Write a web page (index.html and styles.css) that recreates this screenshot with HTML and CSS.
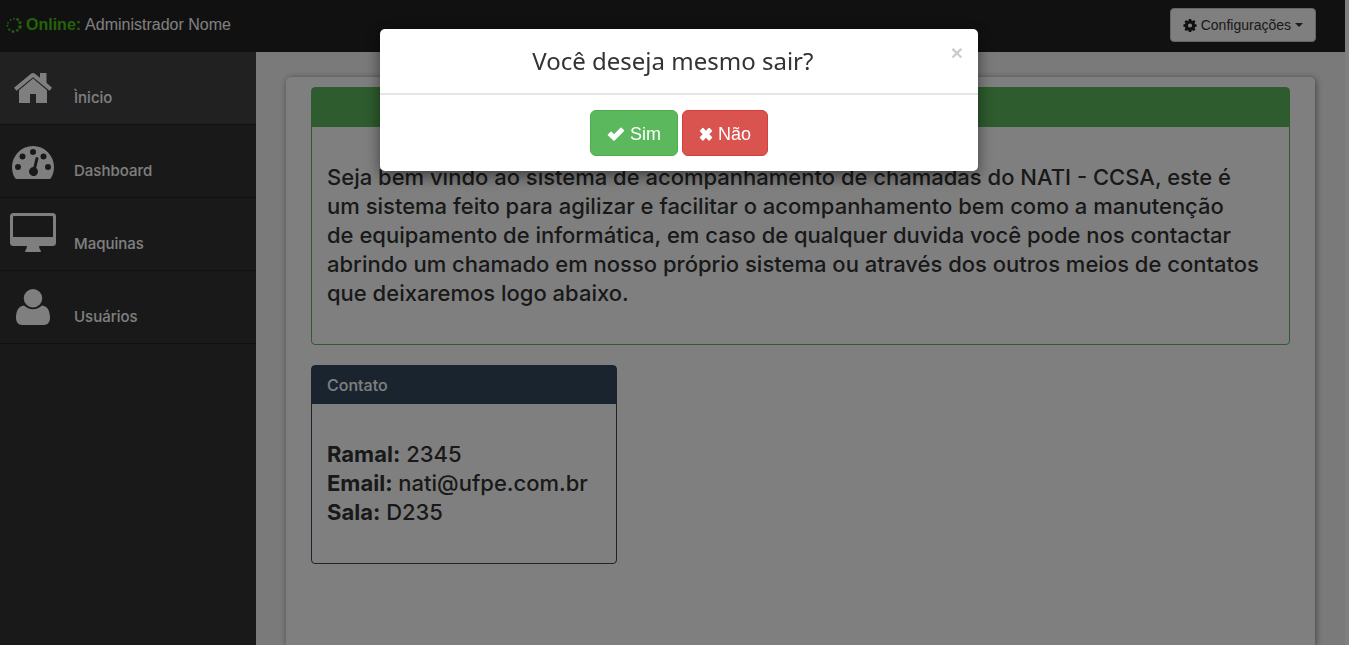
FILE: index.html
```html
<!DOCTYPE html>
<html lang="pt-BR">
<head>
<meta charset="utf-8">
<meta name="viewport" content="width=device-width, initial-scale=1">
<title>NATI - CCSA</title>
<link rel="stylesheet" href="styles.css">
</head>
<body>
<div class="page">
  <header class="topbar">
    <div class="status">
      <svg class="status-icon" viewBox="0 0 16 16" aria-hidden="true">
        <circle cx="8" cy="1.7" r="1"/><circle cx="11.6" cy="2.6" r="1.5"/><circle cx="14" cy="5.5" r="1.6"/><circle cx="14" cy="9.9" r="1.9"/><circle cx="11.3" cy="13.3" r="1.4"/><circle cx="7" cy="14.5" r="1.5"/><circle cx="3.3" cy="12.6" r="1.2"/><circle cx="1.4" cy="8.8" r="1"/><circle cx="2" cy="5.8" r=".9"/><circle cx="4.6" cy="3" r="1"/>
      </svg>
      <strong class="online">Online:</strong>
      <span>Administrador Nome</span>
    </div>
    <button class="btn-config" type="button">
      <svg class="gear" viewBox="0 0 14 14" aria-hidden="true"><path fill-rule="evenodd" d="M5.800 1h2.400l.3 1.600 1 .4 1.400-.9 1.600 1.600-.9 1.400.4 1 1.600.3v2.400l-1.600.3-.4 1 .9 1.300-1.600 1.700-1.400-.9-1 .4-.3 1.500H5.800l-.3-1.500-1-.4-1.400.9-1.600-1.700.9-1.300-.4-1L.4 8.800V6.400L2 6.100l.4-1-.9-1.400 1.600-1.600 1.400.9 1-.4zM7 5.400a2.100 2.100 0 1 0 0 4.200 2.100 2.100 0 0 0 0-4.200z"/></svg>
      <span>Configurações</span>
      <span class="caret"></span>
    </button>
  </header>
  <div class="shell">
    <nav class="sidebar">
      <a class="nav-item active" href="#">
        <svg class="nav-icon" viewBox="0 0 46 42" aria-hidden="true"><path d="M21 7.800q2-1.600 4 0l5 4V7h6.500v9.800L42 21.800l-2.500 3L23 11.200 6.500 24.800l-2.500-3z"/><path d="M23 12.600l14 11.600V37H26v-9h-6v9H9V24.200z"/></svg>
        <span>Ìnicio</span>
      </a>
      <a class="nav-item" href="#">
        <svg class="nav-icon" viewBox="0 0 46 42" aria-hidden="true"><path fill-rule="evenodd" d="M23 7a21 21 0 0 1 21 21c0 4-1 8-3.200 11.200q-.5.800-1.500.8H6.700q-1 0-1.500-.8C3 36 2 32 2 28A21 21 0 0 1 23 7zM8 25a3 3 0 1 0 0 6 3 3 0 0 0 0-6zM12.500 14.500a3 3 0 1 0 0 6 3 3 0 0 0 0-6zM23 10a3 3 0 1 0 0 6 3 3 0 0 0 0-6zM33.500 14.500a3 3 0 1 0 0 6 3 3 0 0 0 0-6zM38 25a3 3 0 1 0 0 6 3 3 0 0 0 0-6zM25.600 19.100L23.400 28a4.500 4.500 0 1 0 2.800.9l2.200-9.100a1.450 1.450 0 0 0-2.800-.7z"/></svg>
        <span>Dashboard</span>
      </a>
      <a class="nav-item" href="#">
        <svg class="nav-icon" viewBox="0 0 46 42" aria-hidden="true"><path fill-rule="evenodd" d="M3.500 1h39Q46 1 46 4.500v26q0 3.500-3.500 3.500H29q.2 3 1.800 4.500.5 1.500-.8 1.500H16q-1.300 0-.8-1.500Q16.800 37 17 34H3.500Q0 34 0 30.500v-26Q0 1 3.500 1zM4 4q-1 0-1 1v20h40V5q0-1-1-1z"/></svg>
        <span>Maquinas</span>
      </a>
      <a class="nav-item" href="#">
        <svg class="nav-icon" viewBox="0 0 46 42" aria-hidden="true"><circle cx="23" cy="13.200" r="9.200"/><path d="M14 20.500q3.800 3.700 9 3.700t9-3.700c5.500.5 8 5.500 8 12.500 0 4.200-2.600 7-6 7H12c-3.400 0-6-2.800-6-7 0-7 2.500-12 8-12.500z"/></svg>
        <span>Usuários</span>
      </a>
    </nav>
    <main class="main">
      <div class="sheet">
        <section class="panel panel-green">
          <div class="panel-head"></div>
          <div class="panel-body">
            <p class="lead">Seja bem vindo ao sistema de acompanhamento de chamadas do NATI - CCSA, este é<br>
            um sistema feito para agilizar e facilitar o acompanhamento bem como a manutenção<br>
            de equipamento de informática, em caso de qualquer duvida você pode nos contactar<br>
            abrindo um chamado em nosso próprio sistema ou através dos outros meios de contatos<br>
            que deixaremos logo abaixo.</p>
          </div>
        </section>
        <section class="panel panel-navy">
          <h2 class="panel-head">Contato</h2>
          <div class="panel-body">
            <p class="lead"><strong>Ramal:</strong> 2345<br><strong>Email:</strong> nati@ufpe.com.br<br><strong>Sala:</strong> D235</p>
          </div>
        </section>
      </div>
    </main>
  </div>
</div>
<div class="backdrop">
  <div class="modal" role="dialog" aria-modal="true" aria-labelledby="modal-title">
    <div class="modal-head">
      <h1 class="modal-title" id="modal-title">Você deseja mesmo sair?</h1>
      <button class="close" type="button" aria-label="Fechar">×</button>
    </div>
    <div class="modal-foot">
      <button class="btn btn-yes" type="button">
        <svg class="btn-icon" viewBox="0 0 18 18" aria-hidden="true"><path d="M.8 9.500l2.700-2.700q.6-.5 1.200 0L7 9.200 13.400 2.800q.6-.5 1.200 0l2.300 2.300q.6.600 0 1.200L7.700 15.400q-.7.600-1.400 0L.8 10.200q-.3-.3 0-.7z"/></svg>
        <span>Sim</span>
      </button>
      <button class="btn btn-no" type="button">
        <svg class="btn-icon btn-icon-x" viewBox="0 0 14 18" aria-hidden="true"><path d="M1 5.500L3.400 3q.5-.4 1 0L7 5.800 9.600 3q.5-.4 1 0L13 5.500q.5.500 0 1L10.300 9.300l2.700 2.700q.5.500 0 1l-2.400 2.400q-.5.500-1 0L7 12.700l-2.600 2.700q-.5.500-1 0L1 13q-.5-.5 0-1l2.700-2.700L1 6.500q-.5-.5 0-1z"/></svg>
        <span>Não</span>
      </button>
    </div>
  </div>
</div>
</body>
</html>
```
FILE: styles.css
```css
* { box-sizing: border-box; }
body {
  margin: 0;
  height: 100vh;
  overflow: hidden;
  background: #fff;
  color: #333;
  font-family: Inter, "Noto Sans", sans-serif;
  font-weight: 500;
}
.page {
  display: flex;
  flex-direction: column;
  height: 100%;
  margin-right: 4px;
}
.topbar {
  display: flex;
  justify-content: space-between;
  align-items: center;
  height: 52px;
  padding: 0 29px 2px 6px;
  background: #222;
  font: 16px/20px "Liberation Sans", Arial, sans-serif;
  color: #fff;
}
.status { display: flex; align-items: center; gap: 4px; }
.status-icon { width: 16px; height: 16px; fill: #49b81e; }
.online { color: #49c414; }
.btn-config {
  display: flex;
  align-items: center;
  gap: 4px;
  height: 34px;
  padding: 0 12px;
  border: 1px solid #ccc;
  border-radius: 4px;
  background: #fff;
  color: #333;
  font: 14px/20px "Liberation Sans", Arial, sans-serif;
}
.gear { width: 14px; height: 14px; fill: #222; }
.caret {
  border: 4px solid transparent;
  border-top-color: #333;
  border-bottom: 0;
}
.shell { display: flex; flex: 1; min-height: 0; }
.sidebar { flex: none; width: 256px; background: #333; }
.nav-item {
  display: flex;
  align-items: flex-end;
  gap: 18px;
  padding: 14px 10px 16px;
  border-bottom: 1px solid #222;
  color: #fff;
  font-size: 15px;
  line-height: 20px;
  text-decoration: none;
}
.nav-item.active { background: #434343; }
.nav-icon { width: 46px; height: 42px; fill: #fff; }
.main { flex: 1; padding: 25px 30px 0; background: #f4f4f4; }
.sheet {
  height: 100%;
  padding: 10px 25px 0;
  border-radius: 5px 5px 0 0;
  background: #fff;
  box-shadow: 1px 1px 6px #888;
}
.panel {
  margin-bottom: 20px;
  border: 1px solid #5cb85c;
  border-radius: 4px;
}
.panel-head {
  min-height: 39px;
  margin: 0;
  padding: 9px 15px;
  background: #5cb85c;
  color: #fff;
  font-size: 16px;
  font-weight: 500;
  line-height: 20px;
}
.panel-body { padding: 36px 15px; }
.panel-navy { width: 306px; border-color: #34495e; }
.panel-navy .panel-head { min-height: 38px; background: #34495e; }
.lead { margin: 0; font-size: 22px; line-height: 29px; white-space: nowrap; }
.lead strong { font-weight: 700; }
.backdrop {
  position: fixed;
  inset: 0;
  padding: 29px 0 0 9px;
  background: rgba(0, 0, 0, .5);
}
.modal {
  width: 598px;
  max-width: 100%;
  margin: 0 auto;
  border-radius: 5px;
  background: #fff;
  box-shadow: 0 5px 15px rgba(0, 0, 0, .5);
}
.modal-head {
  display: flex;
  align-items: flex-start;
  padding: 15px;
  border-bottom: 2px solid #e5e5e5;
}
.modal-title {
  flex: 1;
  margin: 0;
  font: 400 24px/34px "Noto Sans", sans-serif;
  text-align: center;
}
.close {
  padding: 0;
  border: 0;
  background: none;
  color: #ccc;
  font: 700 21px/18px "Liberation Sans", Arial, sans-serif;
}
.modal-foot {
  display: flex;
  justify-content: center;
  gap: 4px;
  padding: 15px;
}
.btn {
  display: flex;
  align-items: center;
  gap: 5px;
  height: 46px;
  padding: 1px 16px 0;
  border: 1px solid;
  border-radius: 6px;
  color: #fff;
  font: 18px/24px "Liberation Sans", Arial, sans-serif;
}
.btn-yes { background: #5cb85c; border-color: #4cae4c; }
.btn-no { background: #d9534f; border-color: #d43f3a; }
.btn-icon { width: 18px; height: 18px; fill: #fff; }
.btn-icon-x { width: 14px; }
```
